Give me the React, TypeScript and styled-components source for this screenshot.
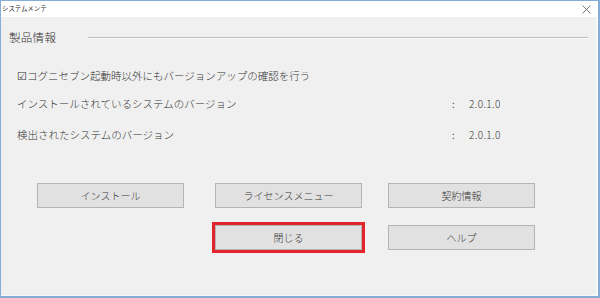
import React from "react";
import styled, { createGlobalStyle } from "styled-components";

const Global = createGlobalStyle`
  html, body { margin: 0; padding: 0; background: #ffffff; }
  body { font-family: "Noto Sans CJK JP", "Noto Sans", sans-serif; }
  * { box-sizing: border-box; }
`;

const Window = styled.div`
  width: 600px;
  height: 298px;
  display: flex;
  flex-direction: column;
  border: 1px solid #86acd8;
  border-bottom-width: 2px;
  border-right-width: 2px;
  background: #ffffff;
  overflow: hidden;
`;

const TitleBar = styled.div`
  height: 16px;
  flex: none;
  display: flex;
  align-items: center;
  justify-content: space-between;
  background: #ffffff;
  padding: 0 7px 0 1px;
`;

const Title = styled.span`
  font-size: 6.4px;
  line-height: 10px;
  color: #222;
  white-space: nowrap;
`;

const CloseIcon = styled.svg`
  width: 9px;
  height: 9px;
  display: block;
`;

const Body = styled.div`
  flex: 1;
  background: #f0f0f0;
  border-right: 2px solid #f9f9f9;
  border-bottom: 1px solid #f9f9f9;
  padding: 13px 8px 0 8px;
  display: flex;
  flex-direction: column;
  color: #333;
  font-weight: 300;
`;

const GroupHeader = styled.div`
  display: flex;
  align-items: center;
  height: 14px;
`;

const GroupLabel = styled.span`
  font-size: 11.5px;
  letter-spacing: 0.3px;
  line-height: 14px;
  white-space: nowrap;
`;

const Rule = styled.div`
  flex: 1;
  margin-left: 32px;
  margin-top: 2px;
  height: 2px;
  border-top: 1px solid #bdbdbd;
  border-bottom: 1px solid #fcfcfc;
`;

const CheckRow = styled.div`
  margin-top: 25px;
  padding-left: 8px;
  font-size: 10.5px;
  line-height: 14px;
  white-space: nowrap;
`;

const InfoRow = styled.div<{ $top: number }>`
  margin-top: ${(p) => p.$top}px;
  padding-left: 8px;
  display: grid;
  grid-template-columns: 435px 17px auto;
  font-size: 10.5px;
  line-height: 14px;
  white-space: nowrap;
`;

const Value = styled.span`
  font-size: 10px;
  letter-spacing: 0.4px;
`;

const ButtonGrid = styled.div`
  margin-top: 41px;
  padding-left: 28px;
  display: grid;
  grid-template-columns: 178px 173px 147px;
  grid-template-rows: 25px 25px;
  row-gap: 17px;
`;

const Button = styled.button<{ $focus?: boolean; $col: number; $row: number }>`
  grid-column: ${(p) => p.$col};
  grid-row: ${(p) => p.$row};
  width: 147px;
  height: 25px;
  margin: 0;
  padding: 0;
  background: #e1e1e1;
  border: 1px solid #b4b4b4;
  font-family: "Noto Sans CJK JP", "Noto Sans", sans-serif;
  font-weight: 300;
  font-size: 10px;
  color: #3a3a3a;
  outline: ${(p) => (p.$focus ? "3px solid #e2252c" : "none")};
  outline-offset: 0;
`;

export default function App() {
  return (
    <>
      <Global />
      <Window>
        <TitleBar>
          <Title>システムメンテ</Title>
          <CloseIcon viewBox="0 0 9 9">
            <path d="M0.5 0.5 L8.5 8.5 M8.5 0.5 L0.5 8.5" stroke="#555" strokeWidth="0.8" fill="none" />
          </CloseIcon>
        </TitleBar>
        <Body>
          <GroupHeader>
            <GroupLabel>製品情報</GroupLabel>
            <Rule />
          </GroupHeader>
          <CheckRow>☑コグニセブン起動時以外にもバージョンアップの確認を行う</CheckRow>
          <InfoRow $top={14}>
            <span>インストールされているシステムのバージョン</span>
            <span>:</span>
            <Value>2.0.1.0</Value>
          </InfoRow>
          <InfoRow $top={17}>
            <span>検出されたシステムのバージョン</span>
            <span>:</span>
            <Value>2.0.1.0</Value>
          </InfoRow>
          <ButtonGrid>
            <Button $col={1} $row={1}>インストール</Button>
            <Button $col={2} $row={1}>ライセンスメニュー</Button>
            <Button $col={3} $row={1}>契約情報</Button>
            <Button $col={2} $row={2} $focus>閉じる</Button>
            <Button $col={3} $row={2}>ヘルプ</Button>
          </ButtonGrid>
        </Body>
      </Window>
    </>
  );
}
